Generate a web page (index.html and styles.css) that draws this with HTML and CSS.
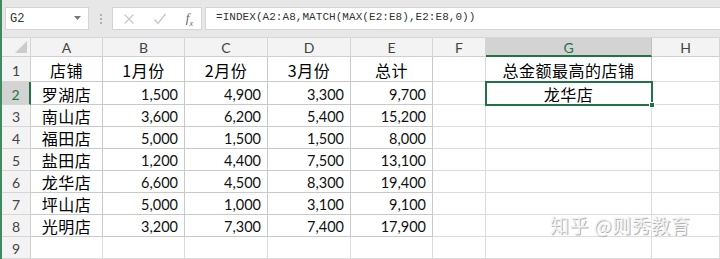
FILE: index.html
```html
<!DOCTYPE html>
<html lang="zh">
<head>
<meta charset="utf-8">
<title>Excel</title>
<link rel="stylesheet" href="styles.css">
</head>
<body>
<div class="app">
  <div class="toolbar">
    <div class="namebox">
      <span class="name">G2</span>
      <svg class="dd" width="8" height="5" viewBox="0 0 8 5"><path d="M0 0h7L3.5 4z" fill="#777"/></svg>
    </div>
    <div class="dots"><i></i><i></i><i></i></div>
    <div class="fbtns">
      <svg width="12" height="12" viewBox="0 0 12 12"><path d="M1.5 1.5l9 9M10.5 1.5l-9 9" stroke="#c8c8c8" stroke-width="1.3"/></svg>
      <svg width="14" height="12" viewBox="0 0 14 12"><path d="M1.5 6.5l3.5 4L12.5 1" stroke="#c8c8c8" stroke-width="1.4" fill="none"/></svg>
      <span class="fx"><i>f</i><sub>x</sub></span>
    </div>
    <div class="formula">=INDEX(A2:A8,MATCH(MAX(E2:E8),E2:E8,0))</div>
  </div>
  <div class="sheet">
    <div class="hd corner"><span class="tri"></span></div>
    <div class="hd">A</div><div class="hd">B</div><div class="hd">C</div><div class="hd">D</div><div class="hd">E</div><div class="hd">F</div><div class="hd sel">G</div><div class="hd">H</div>

    <div class="rh">1</div>
    <div class="c t">店铺</div><div class="c t">1月份</div><div class="c t">2月份</div><div class="c t">3月份</div><div class="c t">总计</div><div class="c"></div><div class="c t">总金额最高的店铺</div><div class="c"></div>

    <div class="rh rsel">2</div>
    <div class="c t">罗湖店</div><div class="c n">1,500</div><div class="c n">4,900</div><div class="c n">3,300</div><div class="c n">9,700</div><div class="c"></div><div class="c t active">龙华店<span class="handle"></span></div><div class="c"></div>

    <div class="rh">3</div>
    <div class="c t">南山店</div><div class="c n">3,600</div><div class="c n">6,200</div><div class="c n">5,400</div><div class="c n">15,200</div><div class="c"></div><div class="c"></div><div class="c"></div>

    <div class="rh">4</div>
    <div class="c t">福田店</div><div class="c n">5,000</div><div class="c n">1,500</div><div class="c n">1,500</div><div class="c n">8,000</div><div class="c"></div><div class="c"></div><div class="c"></div>

    <div class="rh">5</div>
    <div class="c t">盐田店</div><div class="c n">1,200</div><div class="c n">4,400</div><div class="c n">7,500</div><div class="c n">13,100</div><div class="c"></div><div class="c"></div><div class="c"></div>

    <div class="rh">6</div>
    <div class="c t">龙华店</div><div class="c n">6,600</div><div class="c n">4,500</div><div class="c n">8,300</div><div class="c n">19,400</div><div class="c"></div><div class="c"></div><div class="c"></div>

    <div class="rh">7</div>
    <div class="c t">坪山店</div><div class="c n">5,000</div><div class="c n">1,000</div><div class="c n">3,100</div><div class="c n">9,100</div><div class="c"></div><div class="c"></div><div class="c"></div>

    <div class="rh">8</div>
    <div class="c t">光明店</div><div class="c n">3,200</div><div class="c n">7,300</div><div class="c n">7,400</div><div class="c n">17,900</div><div class="c"></div><div class="c"></div><div class="c"></div>

    <div class="rh">9</div>
    <div class="c"></div><div class="c"></div><div class="c"></div><div class="c"></div><div class="c"></div><div class="c"></div><div class="c"></div><div class="c"></div>
  </div>
  <div class="watermark">知乎 @则秀教育</div>
</div>
</body>
</html>
```
FILE: styles.css
```css
* { box-sizing: border-box; }
html, body { margin: 0; padding: 0; background: #fff; }
body { width: 720px; height: 259px; overflow: hidden; }
.app {
  position: relative;
  width: 720px;
  height: 259px;
  overflow: hidden;
  border-left: 2px solid #3f8a5f;
}
.toolbar {
  height: 38px;
  background: #e7e7e7;
  display: flex;
  align-items: flex-start;
  padding: 7px 0 0 3px;
  border-bottom: 1px solid #d6d6d6;
}
.namebox {
  width: 84px;
  height: 23px;
  background: #fff;
  border: 1px solid #d4d4d4;
  display: flex;
  align-items: center;
  justify-content: space-between;
  padding: 0 6px 0 4px;
  font-family: "Liberation Mono", monospace;
  font-size: 12px;
  color: #333;
}
.dots {
  width: 23px;
  display: flex;
  flex-direction: column;
  align-items: center;
  gap: 2px;
  padding-top: 7px;
}
.dots i { width: 2px; height: 2px; background: #b0b0b0; display: block; }
.fbtns {
  width: 90px;
  height: 23px;
  background: #fff;
  border: 1px solid #d4d4d4;
  display: flex;
  align-items: center;
  justify-content: space-between;
  padding: 0 8px 0 10px;
}
.fx { font-family: "Liberation Serif", serif; font-size: 13px; color: #666; }
.fx sub { font-size: 8px; font-style: italic; }
.formula {
  flex: 1;
  margin-left: 3px;
  height: 23px;
  background: #fff;
  border: 1px solid #d4d4d4;
  border-right: none;
  padding: 3px 0 0 10px;
  font-family: "Liberation Mono", monospace;
  font-size: 11px;
  color: #333;
  letter-spacing: 0.05px;
}
.sheet {
  display: grid;
  grid-template-columns: 29px 72px 82px 83px 83px 82px 53px 166px 68px;
  grid-template-rows: 19px 25px 23px 22px 22px 22px 22px 22px 22px 22px;
}
.hd {
  background: #f3f3f3;
  border-right: 1px solid #d6d6d6;
  border-bottom: 1px solid #cfcfcf;
  font-family: Lato, "Liberation Sans", sans-serif;
  font-size: 14px;
  color: #444;
  display: flex;
  align-items: center;
  justify-content: center;
  padding-top: 1px;
}
.hd.sel {
  background: #d3d3d3;
  color: #217346;
  border-bottom: 2px solid #217346;
  border-right-color: #c0c0c0;
}
.corner { position: relative; }
.tri {
  position: absolute;
  right: 3px;
  bottom: 3px;
  width: 0; height: 0;
  border-left: 12px solid transparent;
  border-bottom: 12px solid #cbcbcb;
}
.rh {
  background: #f3f3f3;
  border-right: 1px solid #d0d0d0;
  border-bottom: 1px solid #d6d6d6;
  font-family: Lato, "Liberation Sans", sans-serif;
  font-size: 14px;
  color: #444;
  display: flex;
  align-items: center;
  justify-content: center;
  padding-top: 2px;
}
.rh.rsel {
  background: #d3d3d3;
  color: #217346;
  border-right: 2px solid #217346;
}
.c {
  border-right: 1px solid #dcdcdc;
  border-bottom: 1px solid #dcdcdc;
  display: flex;
  align-items: center;
  font-size: 16px;
  color: #111;
  position: relative;
}
.t, .n { border-color: #c9c9c9; }
.t {
  justify-content: center;
  font-family: "Noto Sans CJK SC", sans-serif;
  font-size: 16px;
  font-weight: 400;
  color: #000;
  padding-top: 1px;
  letter-spacing: 0.5px;
}
.n {
  justify-content: flex-end;
  padding-right: 6px;
  padding-top: 2px;
  font-family: Lato, "Liberation Sans", sans-serif;
  font-size: 14.5px;
}
.active {
  outline: 2px solid #217346;
  outline-offset: -1px;
  z-index: 2;
}
.handle {
  position: absolute;
  right: -4px;
  bottom: -4px;
  width: 6px;
  height: 6px;
  background: #217346;
  border: 1px solid #fff;
}
.watermark {
  position: absolute;
  left: 548px;
  top: 211px;
  font-family: "Noto Sans CJK SC", sans-serif;
  font-size: 19px;
  color: #f2f2f2;
  text-shadow: 1px 1px 0 #b4b4b4, -1px -1px 0 #fdfdfd;
  letter-spacing: 0.5px;
}
```
